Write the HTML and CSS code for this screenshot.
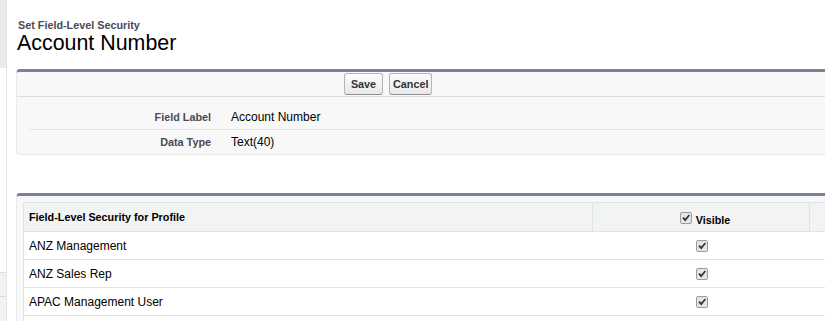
FILE: index.html
```html
<!DOCTYPE html>
<html lang="en">
<head>
    <meta charset="UTF-8">
    <title>Set Field-Level Security: Account Number</title>
    <link rel="stylesheet" href="styles.css">
</head>
<body>
    <div class="page">
        <div class="sidebar">
            <div class="sidebar-top"></div>
            <div class="sidebar-mid"></div>
            <div class="sidebar-box"></div>
            <div class="sidebar-rest"></div>
        </div>

        <div class="main">
            <div class="page-title">
                <div class="page-type">Set Field-Level Security</div>
                <h1 class="page-desc">Account Number</h1>
            </div>

            <!-- Field details -->
            <div class="block">
                <div class="block-buttons">
                    <button class="btn btn-save">Save</button>
                    <button class="btn">Cancel</button>
                </div>
                <div class="detail-list">
                    <div class="detail-row">
                        <div class="label-col">Field Label</div>
                        <div class="data-col">Account Number</div>
                    </div>
                    <div class="detail-row">
                        <div class="label-col">Data Type</div>
                        <div class="data-col">Text(40)</div>
                    </div>
                </div>
            </div>

            <!-- Profile security -->
            <div class="block block-list">
                <div class="fls-table">
                    <div class="th th-profile">Field-Level Security for Profile</div>
                    <div class="th th-visible">
                        <svg class="check" width="12" height="12" viewBox="0 0 12 12"><rect x="0.5" y="0.5" width="11" height="11" rx="1.5" fill="#e6e6e6" stroke="#9c9c9c"/><polygon points="2.3,6.3 3.9,5 5.1,6.7 8.8,2.4 10,3.4 5.2,9.4" fill="#333"/></svg>
                        <span>Visible</span>
                    </div>
                    <div class="th th-extra"></div>

                    <div class="td">ANZ Management</div>
                    <div class="td td-check"><svg class="check" width="12" height="12" viewBox="0 0 12 12"><rect x="0.5" y="0.5" width="11" height="11" rx="1.5" fill="#e6e6e6" stroke="#9c9c9c"/><polygon points="2.3,6.3 3.9,5 5.1,6.7 8.8,2.4 10,3.4 5.2,9.4" fill="#333"/></svg></div>
                    <div class="td"></div>

                    <div class="td">ANZ Sales Rep</div>
                    <div class="td td-check"><svg class="check" width="12" height="12" viewBox="0 0 12 12"><rect x="0.5" y="0.5" width="11" height="11" rx="1.5" fill="#e6e6e6" stroke="#9c9c9c"/><polygon points="2.3,6.3 3.9,5 5.1,6.7 8.8,2.4 10,3.4 5.2,9.4" fill="#333"/></svg></div>
                    <div class="td"></div>

                    <div class="td">APAC Management User</div>
                    <div class="td td-check"><svg class="check" width="12" height="12" viewBox="0 0 12 12"><rect x="0.5" y="0.5" width="11" height="11" rx="1.5" fill="#e6e6e6" stroke="#9c9c9c"/><polygon points="2.3,6.3 3.9,5 5.1,6.7 8.8,2.4 10,3.4 5.2,9.4" fill="#333"/></svg></div>
                    <div class="td"></div>

                    <div class="td"></div>
                    <div class="td"></div>
                    <div class="td"></div>
                </div>
            </div>
        </div>
    </div>
</body>
</html>
```

FILE: styles.css
```css
/* Base */
* {
    box-sizing: border-box;
    margin: 0;
    padding: 0;
}

body {
    width: 825px;
    height: 321px;
    overflow: hidden;
    background-color: #fff;
    font-family: 'Liberation Sans', Arial, sans-serif;
    font-size: 12px;
    color: #000;
}

.page {
    display: flex;
    min-height: 321px;
}

/* Collapsed sidebar edge */
.sidebar {
    flex: none;
    width: 7px;
    display: flex;
    flex-direction: column;
    border-right: 1px solid #e4e4e4;
}

.sidebar-top {
    height: 68px;
    background-color: #ebebeb;
}

.sidebar-mid {
    height: 204px;
}

.sidebar-box {
    height: 25px;
    background-color: #f1f1f1;
    border-top: 1px solid #dcdcdc;
    border-bottom: 1px solid #dcdcdc;
}

.sidebar-rest {
    flex: 1;
    background-color: #f3f3f3;
}

/* Main column */
.main {
    flex: none;
    width: 1100px;
    padding-left: 9px;
}

.page-title {
    padding: 19px 0 0 1px;
}

.page-type {
    font-size: 10.8px;
    line-height: 12px;
    font-weight: bold;
    color: #4a4a56;
    padding-left: 1px;
}

.page-desc {
    font-size: 21.4px;
    line-height: 24px;
    font-weight: normal;
    color: #000;
}

/* Page blocks */
.block {
    margin-top: 14px;
    background-color: #f8f8f8;
    border: 1px solid #eaeaea;
    border-top: 3px solid #7a8199;
    border-radius: 4px;
}

.block-list {
    margin-top: 38px;
    padding: 6px 0 0 6px;
}

.block-buttons {
    height: 25px;
    padding: 1px 0 0 327px;
    border-bottom: 1px solid #dbdbdb;
    display: flex;
    gap: 6px;
}

.btn {
    height: 22px;
    padding: 0 3px;
    font-family: 'Liberation Sans', Arial, sans-serif;
    font-size: 10.8px;
    font-weight: bold;
    color: #333;
    background: linear-gradient(#fdfdfd, #e8e8e8);
    border: 1px solid #b5b5b5;
    border-bottom-color: #8f8f8f;
    border-radius: 3px;
}

.btn-save {
    width: 39px;
}

/* Field detail rows */
.detail-list {
    margin: 0 12px;
    padding-top: 7px;
}

.detail-row {
    display: flex;
    align-items: center;
    height: 24px;
}

.detail-row:first-child {
    border-bottom: 1px solid #e3e3e3;
    height: 26px;
}

.label-col {
    width: 182px;
    text-align: right;
    font-size: 10.8px;
    font-weight: bold;
    color: #4a4a56;
}

.data-col {
    padding-left: 20px;
}

/* Profile table */
.fls-table {
    display: grid;
    grid-template-columns: 569px 217px 1fr;
    background-color: #fff;
    border-top: 1px solid #e0e3e5;
    border-left: 1px solid #e0e3e5;
}

.th {
    height: 29px;
    display: flex;
    align-items: center;
    background-color: #f2f3f3;
    border-bottom: 1px solid #e0e3e5;
    font-size: 10.8px;
    font-weight: bold;
    line-height: 13px;
}

.th-profile {
    padding-left: 5px;
    border-right: 1px solid #e0e3e5;
}

.th-visible {
    justify-content: center;
    padding-left: 8px;
    border-right: 1px solid #e0e3e5;
}

.th-visible .check {
    margin-top: 2px;
    margin-right: 4px;
}

.th-visible span {
    margin-top: 6px;
}

.td {
    height: 28px;
    display: flex;
    align-items: center;
    padding-left: 5px;
    border-bottom: 1px solid #e3e3e3;
    line-height: 14px;
}

.td-check {
    justify-content: center;
    padding-left: 0;
}

.check {
    display: block;
    flex: none;
}
```
